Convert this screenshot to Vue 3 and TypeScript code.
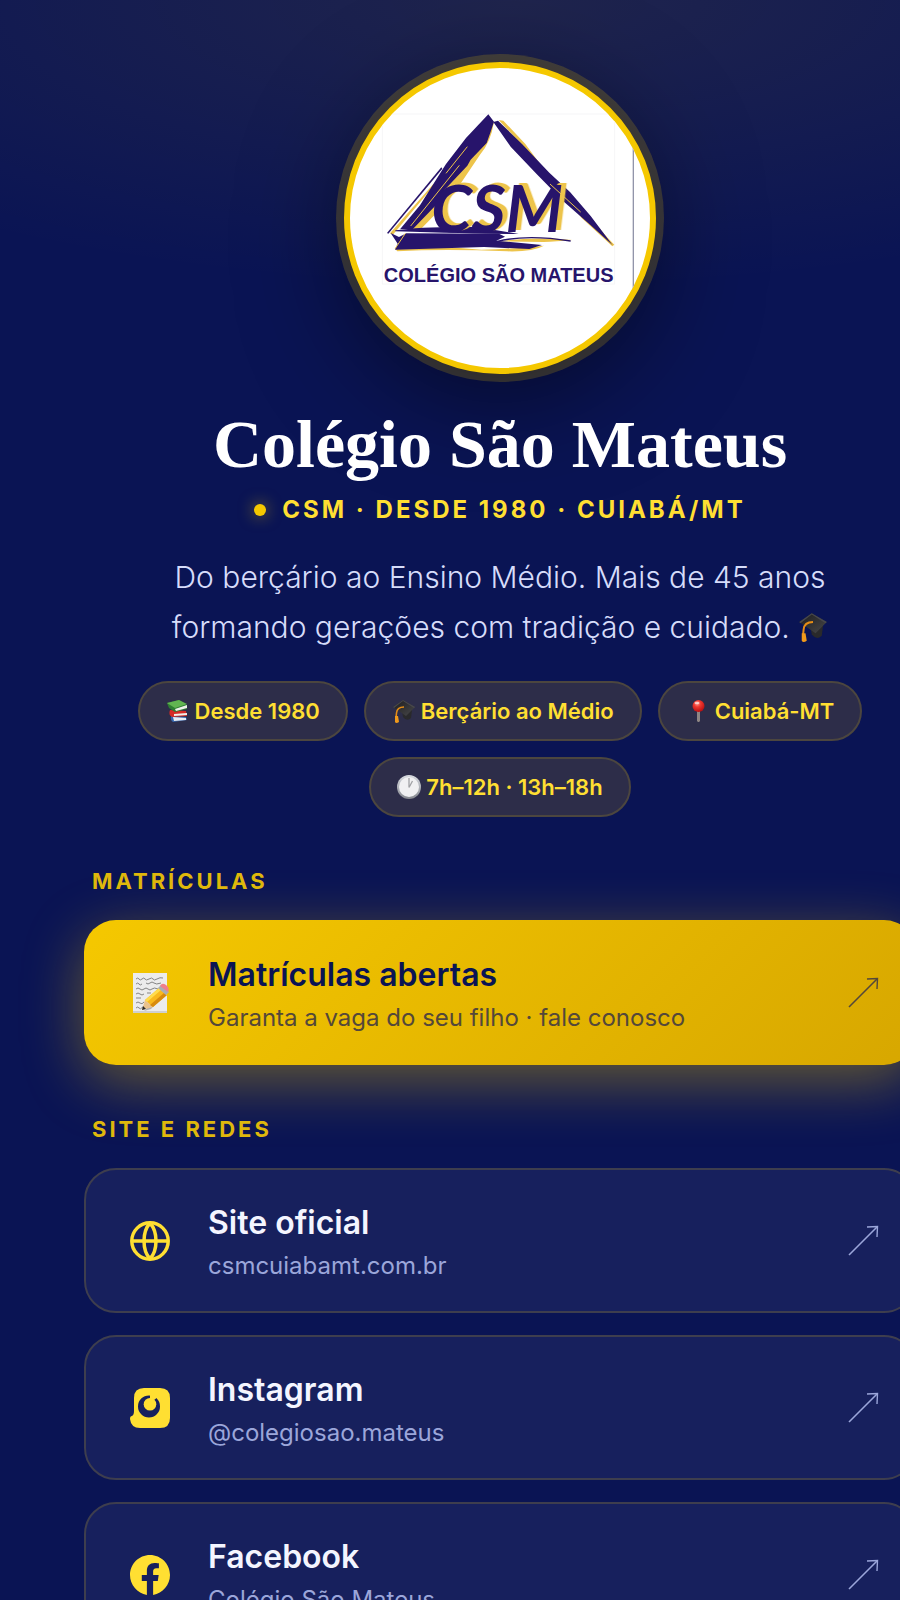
<script setup lang="ts">
type IconName = 'memo' | 'globe' | 'instagram' | 'facebook'
type ChipIcon = 'books' | 'cap' | 'pin' | 'clock'

interface LinkItem {
  title: string
  note: string
  icon: IconName
  href: string
  featured?: boolean
}

interface Section {
  label: string
  links: LinkItem[]
}

const chips: { icon: ChipIcon; text: string }[] = [
  { icon: 'books', text: 'Desde 1980' },
  { icon: 'cap', text: 'Berçário ao Médio' },
  { icon: 'pin', text: 'Cuiabá-MT' },
  { icon: 'clock', text: '7h–12h · 13h–18h' },
]

const sections: Section[] = [
  {
    label: 'Matrículas',
    links: [
      { title: 'Matrículas abertas', note: 'Garanta a vaga do seu filho · fale conosco', icon: 'memo', href: '#matriculas', featured: true },
    ],
  },
  {
    label: 'Site e redes',
    links: [
      { title: 'Site oficial', note: 'csmcuiabamt.com.br', icon: 'globe', href: '#site' },
      { title: 'Instagram', note: '@colegiosao.mateus', icon: 'instagram', href: '#instagram' },
      { title: 'Facebook', note: 'Colégio São Mateus', icon: 'facebook', href: '#facebook' },
    ],
  },
]
</script>

<template>
  <div class="shell">
    <svg class="defs" aria-hidden="true">
      <defs>
        <linearGradient id="cap-top" x1="0" y1="0" x2="1" y2="1">
          <stop offset="0" stop-color="#1c1c1e" />
          <stop offset="1" stop-color="#48484a" />
        </linearGradient>
        <radialGradient id="pin-head" cx="0.4" cy="0.3" r="0.7">
          <stop offset="0" stop-color="#ff9a8c" />
          <stop offset="0.4" stop-color="#f0382f" />
          <stop offset="1" stop-color="#b80f12" />
        </radialGradient>
        <linearGradient id="clock-rim" x1="0" y1="0" x2="0" y2="1">
          <stop offset="0" stop-color="#d9dce2" />
          <stop offset="1" stop-color="#85888f" />
        </linearGradient>
        <symbol id="cap" viewBox="0 0 24 24">
          <path d="M10 12l1 6q4 5 8 1l1-8z" fill="#29292b" />
          <path d="M1 8L11 1l12 7-9 9z" fill="url(#cap-top)" />
          <path d="M11 1l12 7-1 1L11 2 2 9 1 8z" fill="#48484c" />
          <path d="M12 8Q5 8 4.500 14l-.5 5" fill="none" stroke="#e58d16" stroke-width="1.600" />
          <path d="M3 17h3l1 6q-3 2-4 0z" fill="#f19a1b" />
        </symbol>
      </defs>
    </svg>

    <main class="page">
      <header class="hero">
        <div class="logo">
          <svg viewBox="-60 -96 900 900" role="img" aria-label="Colégio São Mateus">
            <rect x="37" y="42" width="697" height="510" fill="none" stroke="#f6f6f7" stroke-width="3" />
            <path d="M790 -60V720" stroke="#9295aa" stroke-width="4" />
            <g fill="#edc44b">
              <path d="M372 66Q362 128 330 164L275 246 228 310 152 388H118L230 220z" />
              <path d="M386 60l14 2 66 70 62 84-12-3-66-84z" />
              <path d="M560 255l60 50 90 105 23 24-6 5-92-85z" />
              <path d="M74 445q140-8 260 4 100-2 188-12-34 19-110 17-190-8-330 0z" />
              <path d="M385 424q100-14 222-4-50 5-86 6z" />
              <path d="M60 400L190 252l3 3L68 405z" />
            </g>
            <g fill="#27146b">
              <path d="M355 43l17 22-10 30-12 34-48 50-10 18-68 72-20 40-76 79H90L150 316l50-80 28-44 60-78z" />
              <path d="M370 66l14-4 72 70 82 86 62 58 62 72 66 88-66-60-82-72-78-80-80-84z" />
              <path d="M62 399l25 12 22-11 278 1 18 9-26 12 137 13-38 12-136-6-267 8 8-18z" />
              <path d="M76 391q80-12 240-10 60 8 130 21-140 0-370-8z" />
              <path d="M214 202L51 399l4 2L217 206z" />
              <path d="M382 424q90-22 220-1" fill="none" stroke="#27146b" stroke-width="4" />
            </g>
            <text class="mark" x="184" y="396">CSM</text>
            <g fill="none" stroke="#edc44b" stroke-width="3">
              <path d="M292 140L228 220" />
              <path d="M268 196L122 378" />
              <path d="M106 400L76 445" />
              <path d="M540 252l92 84" />
            </g>
            <text class="wordmark" x="386" y="547" text-anchor="middle">COLÉGIO SÃO MATEUS</text>
          </svg>
        </div>
        <h1>Colégio São Mateus</h1>
        <p class="tagline"><span class="dot"></span>CSM · DESDE 1980 · CUIABÁ/MT</p>
        <p class="bio">
          Do berçário ao Ensino Médio. Mais de 45 anos<br />
          formando gerações com tradição e cuidado.
          <svg class="bio-cap" aria-hidden="true"><use href="#cap" /></svg>
        </p>
        <ul class="chips">
          <li v-for="chip in chips" :key="chip.text" class="chip">
            <svg v-if="chip.icon === 'books'" viewBox="0 0 24 24" aria-hidden="true">
              <path d="M5 17l15 1 1 3-14 2q-3-2-2-6z" fill="#3566ae" />
              <path d="M7 18l13 1v2L8 22z" fill="#e9eef3" />
              <path d="M4 11l16 1 1 5-15 1q-4-2-2-7z" fill="#d52b25" />
              <path d="M8 15l13-1v2L8 17z" fill="#f2eee8" />
              <path d="M1 4l12-3 8 5v4L9 13 3 9z" fill="#2e7e32" />
              <path d="M1 4l12-3 8 4-12 4z" fill="#62b551" />
              <path d="M9 10l12-4v3L10 12z" fill="#eef2e9" />
            </svg>
            <svg v-else-if="chip.icon === 'cap'" aria-hidden="true"><use href="#cap" /></svg>
            <svg v-else-if="chip.icon === 'pin'" viewBox="0 0 24 24" aria-hidden="true">
              <path d="M11 10h3v12l-1 1h-1l-1-1z" fill="#8e8583" />
              <circle cx="12.500" cy="7" r="6" fill="url(#pin-head)" />
              <ellipse cx="11" cy="4" rx="2.500" ry="1.300" fill="#fff" opacity="0.6" />
            </svg>
            <svg v-else viewBox="0 0 24 24" aria-hidden="true">
              <circle cx="12" cy="12" r="12" fill="url(#clock-rim)" />
              <circle cx="12" cy="12" r="10" fill="#f0f0f2" />
              <path d="M12 12.500V3M12 12.500L15.500 6" fill="none" stroke="#a0a1a5" stroke-width="1.300" />
            </svg>
            {{ chip.text }}
          </li>
        </ul>
      </header>

      <section v-for="section in sections" :key="section.label">
        <h2>{{ section.label }}</h2>
        <nav class="links" :aria-label="section.label">
          <a v-for="link in section.links" :key="link.title" class="card" :class="{ featured: link.featured }" :href="link.href">
            <span class="icon">
              <svg v-if="link.icon === 'memo'" viewBox="0 0 40 40" aria-hidden="true">
                <path d="M3 0h34v40H3z" fill="#ececec" />
                <path d="M3 38h34v2H3z" fill="#cfcfcf" />
                <path d="M6 6q2-2 3 0t3 0 3 0 4 0 4 0 4 0 6-1M6 11q2-2 3 0t3 0M16 10q2 2 4 0t4 0 7 0M6 16q2-2 4 0t4 0 4 0 4 0 6 0M6 21q2-2 4 0t4 0M17 20l4 0M6 25h5M6 30q2-2 4 0t4-1M6 35q2-2 3 0t4-1" fill="none" stroke="#858585" />
                <path d="M14 38L37 18l2-2-18 20z" fill="#555" opacity="0.4" />
                <path d="M12 37l3-10 8 7z" fill="#eac28d" />
                <path d="M12 37l1-4 3 3z" fill="#292929" />
                <path d="M15 27l14-12 8 7-14 12z" fill="#f9b91d" />
                <path d="M15 27l14-12 2 2-14 12z" fill="#ffdc4c" />
                <path d="M20 32l14-12 3 2-14 12z" fill="#d88b0d" />
                <path d="M28 15l3-3 8 7-3 3z" fill="#a9adb3" />
                <path d="M30 13q2-4 6-1 4 3 2 7z" fill="#ef7f8b" />
              </svg>
              <svg v-else-if="link.icon === 'globe'" viewBox="0 0 40 40" fill="none" stroke="currentColor" stroke-width="3.500" aria-hidden="true">
                <circle cx="20" cy="20" r="18.200" />
                <path d="M2 20h36M20 2c-8 9-8 27 0 36M20 2c8 9 8 27 0 36" />
              </svg>
              <svg v-else-if="link.icon === 'instagram'" viewBox="0 0 40 40" fill="currentColor" aria-hidden="true">
                <path fill-rule="evenodd" d="M14 0H30Q40 0 40 10V30Q40 40 30 40H10Q1 40 0 31Q0 28 2 28Q4 27 4 23V10Q4 0 14 0zM19 7.400A11 11 0 1 0 19 29.400A11 11 0 1 0 19 7.400z" />
                <circle cx="20" cy="16.300" r="6.300" />
                <path d="M20 6v5l4 1 2-1.500V8z" />
              </svg>
              <svg v-else viewBox="0 0 24 24" aria-hidden="true">
                <path fill="currentColor" d="M24 12.073C24 5.446 18.627.073 12 .073S0 5.446 0 12.073c0 5.990 4.388 10.954 10.125 11.854v-8.385H7.078v-3.470h3.047V9.430c0-3.007 1.792-4.669 4.533-4.669 1.312 0 2.686.235 2.686.235v2.953H15.830c-1.491 0-1.956.925-1.956 1.874v2.250h3.328l-.532 3.470h-2.796v8.385C19.612 23.027 24 18.062 24 12.073z" />
              </svg>
            </span>
            <span class="copy">
              <strong>{{ link.title }}</strong>
              <small>{{ link.note }}</small>
            </span>
            <svg class="arrow" viewBox="0 0 32 32" fill="none" stroke="currentColor" aria-hidden="true">
              <path d="M1 30L29 2" stroke-width="1.600" />
              <path d="M19 2L29.500 1.500L29 12" stroke-width="1.400" />
            </svg>
          </a>
        </nav>
      </section>
    </main>
  </div>
</template>

<style>
body {
  background: #0a1454;
}
</style>

<style scoped>
.shell {
  overflow: hidden;
  height: 100vh;
  font-family: Inter, "Open Sans", sans-serif;
  color: #f4f5ff;
}
.defs {
  position: absolute;
  width: 0;
  height: 0;
}
.page {
  box-sizing: border-box;
  width: calc(100% + 100px);
  min-height: 100%;
  padding: 62px 84px;
  background: radial-gradient(ellipse 900px 290px at 52% 0, rgba(245, 200, 0, 0.09), transparent);
}
.hero {
  display: flex;
  flex-direction: column;
  align-items: center;
  text-align: center;
}
.logo {
  width: 300px;
  height: 300px;
  border: 6px solid #f5c800;
  border-radius: 50%;
  overflow: hidden;
  background: #fff;
  box-shadow: 0 0 0 8px rgba(245, 200, 0, 0.18), 0 24px 100px rgba(0, 0, 0, 0.5);
}
.logo svg {
  display: block;
  width: 100%;
  height: 100%;
}
.mark {
  font: italic 700 196px Lato, "Liberation Sans", sans-serif;
  fill: #27146b;
  filter: drop-shadow(16px -6px 0 #edc44b);
}
.wordmark {
  font: 700 60px "Liberation Sans", sans-serif;
  fill: #27146b;
}
h1 {
  margin: 34px 0 0;
  font: 700 68px/72px "Liberation Serif", serif;
  color: #fff;
}
.tagline {
  display: flex;
  align-items: center;
  gap: 16px;
  margin: 14px 0 0;
  font-size: 24px;
  line-height: 32px;
  font-weight: 700;
  letter-spacing: 3px;
  color: #ffdf32;
}
.dot {
  width: 12px;
  height: 12px;
  border-radius: 50%;
  background: #f5c800;
  box-shadow: 0 0 16px rgba(245, 200, 0, 0.6);
}
.bio {
  margin: 26px 0 0;
  font-size: 30px;
  line-height: 50px;
  font-weight: 300;
  color: #d6dcfa;
}
.bio-cap {
  width: 30px;
  height: 30px;
  vertical-align: -4px;
}
.chips {
  display: flex;
  flex-wrap: wrap;
  justify-content: center;
  gap: 16px;
  margin: 29px 0 0;
  padding: 0;
  list-style: none;
}
.chip {
  display: flex;
  align-items: center;
  gap: 5px;
  padding: 12px 26px;
  border: 2px solid #4c463f;
  border-radius: 30px;
  background: #2d2d49;
  font-size: 22px;
  line-height: 32px;
  font-weight: 600;
  color: #ffdf32;
}
.chip svg {
  width: 24px;
  height: 24px;
}
h2 {
  margin: 50px 0 25px;
  padding-left: 8px;
  font-size: 22px;
  line-height: 28px;
  font-weight: 700;
  letter-spacing: 3px;
  text-transform: uppercase;
  color: #dfb80c;
}
.links {
  display: flex;
  flex-direction: column;
  gap: 22px;
}
.card {
  box-sizing: border-box;
  display: flex;
  align-items: center;
  gap: 28px;
  min-height: 145px;
  padding: 28px 34px;
  border: 2px solid #3e3e4e;
  border-radius: 32px;
  background: #17205d;
  color: #ffdf32;
  text-decoration: none;
}
.icon {
  display: flex;
  justify-content: center;
  width: 60px;
}
.icon svg {
  width: 40px;
  height: 40px;
}
.copy {
  display: flex;
  flex: 1;
  flex-direction: column;
  gap: 6px;
  padding-top: 2px;
}
.copy strong {
  font-size: 32px;
  line-height: 42px;
  font-weight: 600;
  color: #f4f5ff;
}
.copy small {
  font-size: 24px;
  line-height: 32px;
  color: #9ba6da;
}
.arrow {
  width: 32px;
  height: 32px;
  color: #9ba6da;
}
.featured {
  border-color: transparent;
  background: linear-gradient(135deg, #f5c800, #d7a700) border-box;
  box-shadow: 0 16px 60px rgba(245, 200, 0, 0.4);
}
.featured strong {
  color: #0a1454;
}
.featured small,
.featured .arrow {
  color: #54483a;
}
</style>
